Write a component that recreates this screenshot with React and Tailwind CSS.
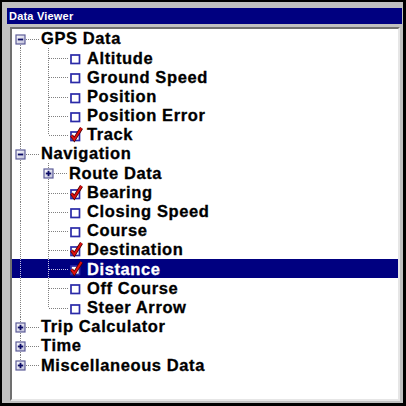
import React from 'react';

const ROWS = [
  ['GPS Data', 0, 'minus'],
  ['Altitude', 1, 'off'],
  ['Ground Speed', 1, 'off'],
  ['Position', 1, 'off'],
  ['Position Error', 1, 'off'],
  ['Track', 1, 'on'],
  ['Navigation', 0, 'minus'],
  ['Route Data', 1, 'plus'],
  ['Bearing', 1, 'on'],
  ['Closing Speed', 1, 'off'],
  ['Course', 1, 'off'],
  ['Destination', 1, 'on'],
  ['Distance', 1, 'on', true],
  ['Off Course', 1, 'off'],
  ['Steer Arrow', 1, 'off'],
  ['Trip Calculator', 0, 'plus'],
  ['Time', 0, 'plus'],
  ['Miscellaneous Data', 0, 'plus'],
];

const H = 19.2;
const CY = 10.5;

function hasNext(i) {
  const lvl = ROWS[i][1];
  for (let j = i + 1; j < ROWS.length; j++) {
    if (ROWS[j][1] < lvl) return false;
    if (ROWS[j][1] === lvl) return true;
  }
  return false;
}

function ancestorLines(i) {
  const lvl = ROWS[i][1];
  const out = [];
  for (let k = 0; k < lvl; k++) {
    let a = i;
    while (a >= 0 && ROWS[a][1] !== k) a--;
    out.push(hasNext(a));
  }
  return out;
}

function VLine({ up, down, color }) {
  return (
    <line
      x1="8.5" x2="8.5" y1={up ? 0 : CY} y2={down ? H : CY}
      stroke={color} strokeWidth="1" strokeDasharray="1 1" shapeRendering="crispEdges"
    />
  );
}

function Expander({ plus, up, down, color }) {
  return (
    <svg width="29" height={H} viewBox={`0 0 29 ${H}`} className="shrink-0">
      <defs>
        <linearGradient id="exp" x1="0" y1="0" x2="1" y2="1">
          <stop offset="0" stopColor="#ffffff" />
          <stop offset="1" stopColor="#bcbcd8" />
        </linearGradient>
      </defs>
      <VLine up={up} down={down} color={color} />
      <line x1="14" x2="27" y1={CY} y2={CY} stroke={color} strokeDasharray="1 1" shapeRendering="crispEdges" />
      <rect x="4" y={CY - 4.5} width="9" height="9" fill="url(#exp)" stroke="#5c5c98" strokeWidth="1.2" />
      <line x1="5.8" x2="11.2" y1={CY} y2={CY} stroke="#0c0c66" strokeWidth="1.8" />
      {plus && <line x1="8.5" x2="8.5" y1={CY - 2.7} y2={CY + 2.7} stroke="#0c0c66" strokeWidth="1.8" />}
    </svg>
  );
}

function Leaf({ checked, up, down, color }) {
  const by = CY - 3.5;
  return (
    <svg width="47" height={H} viewBox={`0 0 47 ${H}`} className="shrink-0 overflow-visible">
      <VLine up={up} down={down} color={color} />
      <line x1="9" x2="28" y1={CY} y2={CY} stroke={color} strokeDasharray="1 1" shapeRendering="crispEdges" />
      <rect x="31" y={by} width="8.5" height="8.5" fill="#ffffff" stroke="#2a2aa8" strokeWidth="1.7" />
      {checked && (
        <g>
          <path d={`M31.5 ${by + 3.5} L34.3 ${by + 7.5} L41.5 ${by - 4}`} fill="none" stroke="#4a0000" strokeWidth="3.4" strokeLinejoin="miter" />
          <path d={`M31.5 ${by + 3.5} L34.3 ${by + 7.5} L41.5 ${by - 4}`} fill="none" stroke="#e01010" strokeWidth="2" strokeLinejoin="miter" />
        </g>
      )}
    </svg>
  );
}

function Row({ i }) {
  const [label, level, kind, selected] = ROWS[i];
  const color = selected ? '#c8c8e8' : '#808080';
  const up = !(level === 0 && i === 0);
  const down = hasNext(i);
  const anc = ancestorLines(i);
  return (
    <div className={`flex items-center h-[19.2px] ${selected ? 'bg-[#000080] text-white' : 'text-black'}`}>
      {anc.map((on, k) => (
        <svg key={k} width="28" height={H} viewBox={`0 0 28 ${H}`} className="shrink-0">
          {on && <VLine up down color={color} />}
        </svg>
      ))}
      {kind === 'minus' || kind === 'plus' ? (
        <Expander plus={kind === 'plus'} up={up} down={down} color={color} />
      ) : (
        <Leaf checked={kind === 'on'} up={up} down={down} color={color} />
      )}
      <span className="text-[16.5px] leading-none font-bold tracking-[0.6px] whitespace-nowrap [-webkit-text-stroke:0.3px_currentColor]">{label}</span>
    </div>
  );
}

export default function App() {
  return (
    <div className="w-[406px] h-[406px] bg-black pt-[2px] pl-[2px] pr-[3px] pb-[3px] font-['Liberation_Sans',Arial,sans-serif]">
      <div className="h-full bg-[#c0c0c0] flex flex-col pt-[6px] pl-[5px] pr-[1px] pb-[2px]">
        <div className="h-[16px] bg-[#000080] flex items-center pl-[2px]">
          <span className="text-white text-[11px] font-bold tracking-[0.2px] leading-none">Data Viewer</span>
        </div>
        <div className="flex-1 mt-[3px] ml-[3px] mr-[2px] border-2 border-t-[#707070] border-l-[#707070] border-r-[#e6e6e6] border-b-[#e6e6e6] bg-white overflow-hidden">
          <div className="flex flex-col">
            {ROWS.map((_, i) => (
              <Row key={i} i={i} />
            ))}
          </div>
        </div>
      </div>
    </div>
  );
}
